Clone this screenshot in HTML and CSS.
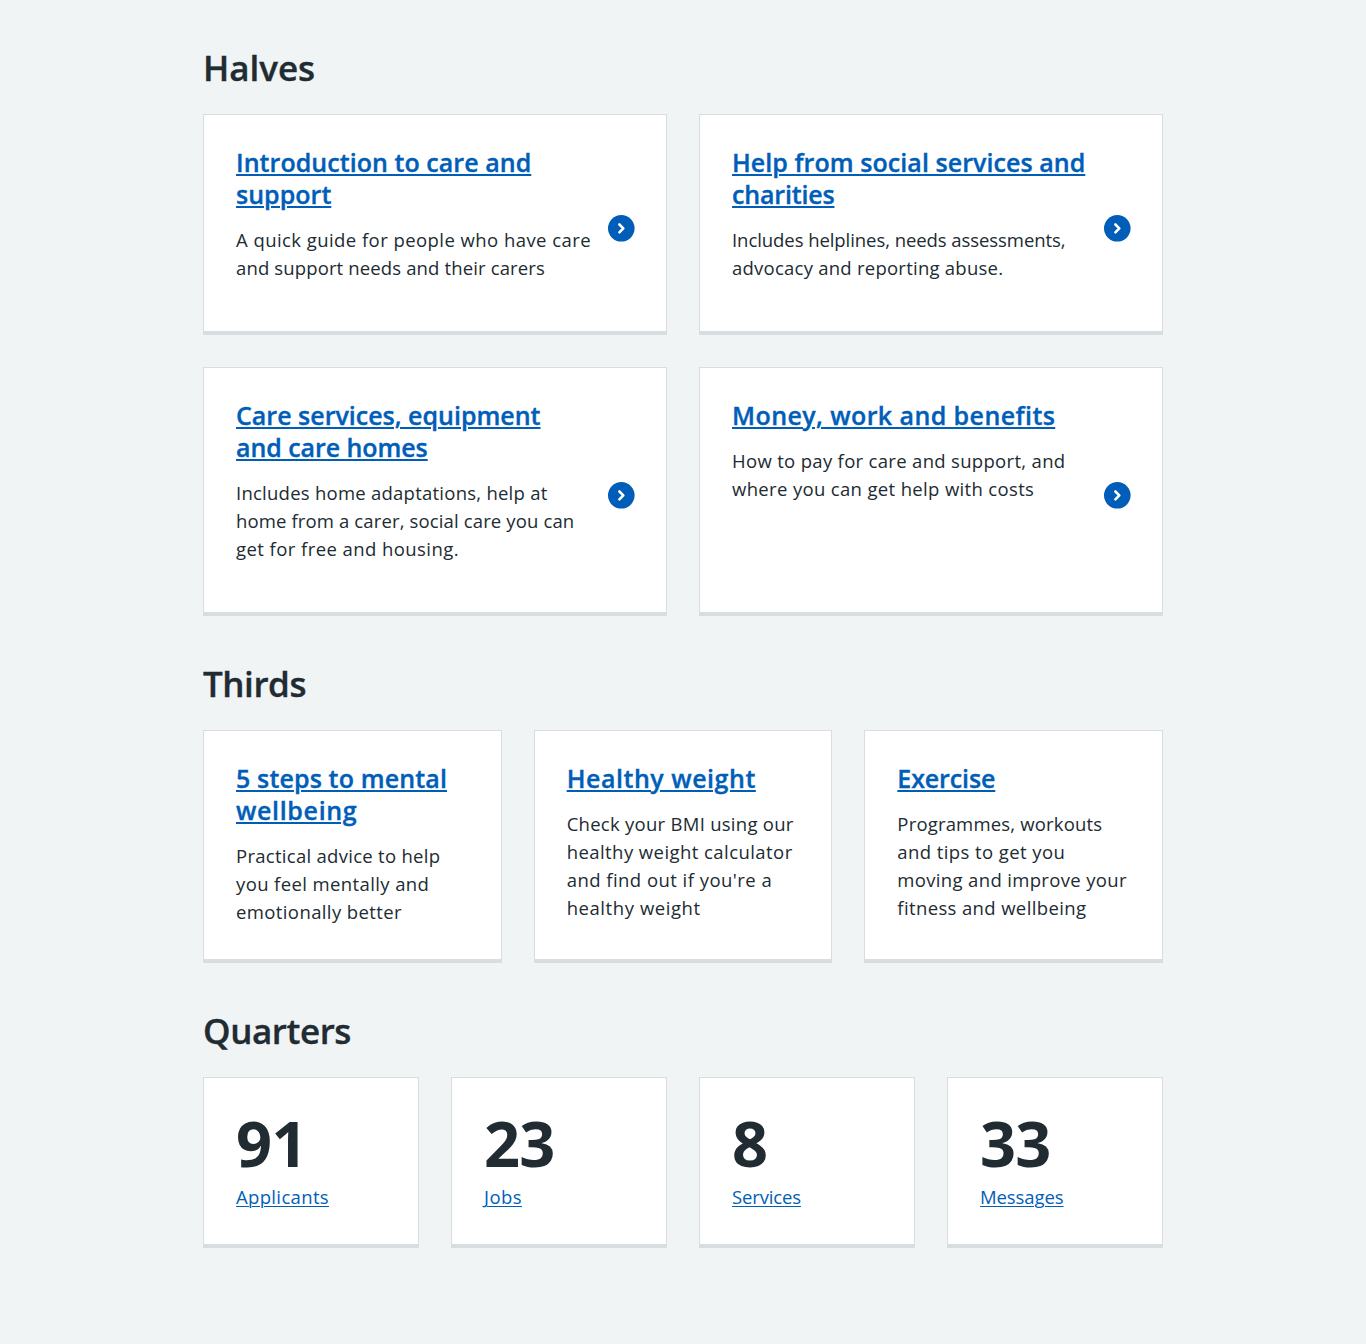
FILE: index.html
```html
<!DOCTYPE html>
<html lang="en">
<head>
<meta charset="utf-8">
<title>Card groups</title>
<link rel="stylesheet" href="styles.css">
</head>
<body>
<main class="container">
<section class="group">
<h2 class="heading"><span data-width="112">Halves</span></h2>
<div class="grid halves">
<article class="card clickable"><h3 class="title"><a href="#"><span data-width="295.3">Introduction to care and</span><br><span data-width="95.3">support</span></a></h3><p class="text"><span data-width="355">A quick guide for people who have care</span><br><span data-width="309">and support needs and their carers</span></p><svg class="icon" viewBox="0 0 27 27"><circle cx="13.3" cy="13.3" r="13.3"/><path d="M11.4 9.5 15.3 13.4 11.4 17.3"/></svg></article>
<article class="card clickable"><h3 class="title"><a href="#"><span data-width="353.3">Help from social services and</span><br><span data-width="102.5">charities</span></a></h3><p class="text"><span data-width="333.5">Includes helplines, needs assessments,</span><br><span data-width="271.3">advocacy and reporting abuse.</span></p><svg class="icon" viewBox="0 0 27 27"><circle cx="13.3" cy="13.3" r="13.3"/><path d="M11.4 9.5 15.3 13.4 11.4 17.3"/></svg></article>
<article class="card clickable"><h3 class="title"><a href="#"><span data-width="304.5">Care services, equipment</span><br><span data-width="191.7">and care homes</span></a></h3><p class="text"><span data-width="311.5">Includes home adaptations, help at</span><br><span data-width="338.3">home from a carer, social care you can</span><br><span data-width="223">get for free and housing.</span></p><svg class="icon" viewBox="0 0 27 27"><circle cx="13.3" cy="13.3" r="13.3"/><path d="M11.4 9.5 15.3 13.4 11.4 17.3"/></svg></article>
<article class="card clickable"><h3 class="title"><a href="#"><span data-width="323.3">Money, work and benefits</span></a></h3><p class="text"><span data-width="333.5">How to pay for care and support, and</span><br><span data-width="302.3">where you can get help with costs</span></p><svg class="icon" viewBox="0 0 27 27"><circle cx="13.3" cy="13.3" r="13.3"/><path d="M11.4 9.5 15.3 13.4 11.4 17.3"/></svg></article>
</div>
</section>
<section class="group">
<h2 class="heading"><span data-width="103">Thirds</span></h2>
<div class="grid thirds">
<article class="card"><h3 class="title"><a href="#"><span data-width="211">5 steps to mental</span><br><span data-width="121.3">wellbeing</span></a></h3><p class="text"><span data-width="204.3">Practical advice to help</span><br><span data-width="193.3">you feel mentally and</span><br><span data-width="166">emotionally better</span></p></article>
<article class="card"><h3 class="title"><a href="#"><span data-width="189.2">Healthy weight</span></a></h3><p class="text"><span data-width="227">Check your BMI using our</span><br><span data-width="226">healthy weight calculator</span><br><span data-width="205.5">and find out if you're a</span><br><span data-width="134">healthy weight</span></p></article>
<article class="card"><h3 class="title"><a href="#"><span data-width="98">Exercise</span></a></h3><p class="text"><span data-width="205">Programmes, workouts</span><br><span data-width="168">and tips to get you</span><br><span data-width="229.5">moving and improve your</span><br><span data-width="189">fitness and wellbeing</span></p></article>
</div>
</section>
<section class="group">
<h2 class="heading"><span data-width="148">Quarters</span></h2>
<div class="grid quarters">
<article class="card"><p class="number"><span data-width="71">91</span></p><a class="text" href="#"><span data-width="93">Applicants</span></a></article>
<article class="card"><p class="number"><span data-width="70.5">23</span></p><a class="text" href="#"><span data-width="38">Jobs</span></a></article>
<article class="card"><p class="number"><span>8</span></p><a class="text" href="#"><span data-width="69">Services</span></a></article>
<article class="card"><p class="number"><span data-width="70.5">33</span></p><a class="text" href="#"><span data-width="83.5">Messages</span></a></article>
</div>
</section>
</main>
<script src="fit.js"></script>
</body>
</html>
```
FILE: fit.js
```javascript
document.querySelectorAll('[data-width]').forEach(function (line) {
  var spare = Number(line.dataset.width) - line.getBoundingClientRect().width;
  line.style.letterSpacing = (spare / line.textContent.length).toFixed(3) + 'px';
});
```
FILE: styles.css
```css
* { box-sizing: border-box; }
body { margin: 0; background: #f0f4f5; color: #212b32; font-family: "Open Sans", "Noto Sans", sans-serif; }
.container { width: 960px; margin: 0 auto; padding-top: 47px; }
.group { margin-bottom: 47px; }
.heading { margin: 0 0 25px; font-size: 35px; line-height: 42px; font-weight: 600; -webkit-text-stroke: 0.35px currentColor; }
.grid { display: grid; gap: 32px; }
.halves { grid-template-columns: repeat(2, 1fr); }
.thirds { grid-template-columns: repeat(3, 1fr); }
.quarters { grid-template-columns: repeat(4, 1fr); }
.card { position: relative; padding: 31px 32px 33px; background: #fff; border: 1px solid #d8dde0; border-bottom-width: 4px; white-space: nowrap; }
.clickable { padding-bottom: 49px; }
.title { margin: 0 0 16px; font-size: 25px; line-height: 32px; font-weight: 600; -webkit-text-stroke: 0.35px currentColor; }
.title a { text-decoration-thickness: 2px; }
a { color: #005eb8; text-decoration-thickness: 1px; text-underline-offset: 2px; }
.text { margin: 0; font-size: 18.5px; line-height: 28px; }
.number { margin: 0 0 6px; font-size: 63px; line-height: 68px; font-weight: 700; }
a.text { display: block; }
.icon { position: absolute; right: 31px; top: calc(50% - 8px); width: 27px; height: 27px; }
.icon circle { fill: #005eb8; }
.icon path { fill: none; stroke: #fff; stroke-width: 2.6; stroke-linecap: round; stroke-linejoin: round; }
```
